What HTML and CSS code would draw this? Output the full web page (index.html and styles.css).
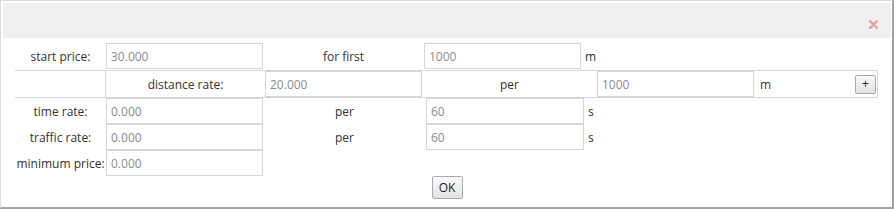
FILE: index.html
```
<!DOCTYPE html>
<html lang="en">
<head>
    <meta charset="UTF-8">
    <title>Tariff</title>
    <link rel="stylesheet" href="styles.css">
</head>
<body>
    <div class="dialog">
        <div class="dialog-header">
            <span class="close" title="close">
                <svg width="9" height="9" viewBox="0 0 9 9">
                    <path d="M1 1 L8 8 M8 1 L1 8" stroke="#e8a39b" stroke-width="2.4" stroke-linecap="square"/>
                </svg>
            </span>
        </div>

        <div class="dialog-body">
            <div class="row row-first">
                <label class="cell-label">start price:</label>
                <input type="text" value="30.000">
                <span class="cell-mid">for first</span>
                <input type="text" value="1000">
                <span class="unit">m</span>
            </div>

            <div class="row row-nested">
                <span class="cell-empty"></span>
                <span class="cell-boxed">distance rate:</span>
                <input type="text" value="20.000">
                <span class="cell-per">per</span>
                <input type="text" value="1000">
                <span class="unit unit-wide">m</span>
                <button class="btn btn-add">+</button>
            </div>

            <div class="row">
                <label class="cell-label">time rate:</label>
                <input type="text" value="0.000">
                <span class="cell-mid cell-mid-wide">per</span>
                <input type="text" class="input-wide" value="60">
                <span class="unit">s</span>
            </div>

            <div class="row">
                <label class="cell-label">traffic rate:</label>
                <input type="text" value="0.000">
                <span class="cell-mid cell-mid-wide">per</span>
                <input type="text" class="input-wide" value="60">
                <span class="unit">s</span>
            </div>

            <div class="row">
                <label class="cell-label">minimum price:</label>
                <input type="text" value="0.000">
            </div>

            <div class="actions">
                <button class="btn btn-ok">OK</button>
            </div>
        </div>
    </div>
</body>
</html>
```

FILE: styles.css
```
body {
    margin: 0;
    font-family: "Open Sans", sans-serif;
    font-size: 12px;
    color: #333;
}
.dialog {
    box-sizing: border-box;
    width: 894px;
    height: 209px;
    border-left: 1px solid #dcdcdc;
    border-top: 1px solid #dcdcdc;
    border-right: 2px solid #a3a3a3;
    border-bottom: 2px solid #a3a3a3;
    padding: 2px 1px 0 2px;
    background: white;
}
.dialog-header {
    height: 35px;
    background: #f0f0f0;
    display: flex;
    align-items: center;
    justify-content: flex-end;
    padding-right: 13px;
}
.close {
    display: flex;
    margin-top: 7px;
}
.dialog-body {
    padding: 4px 0 0 12px;
}
.row {
    display: flex;
    align-items: center;
    height: 26px;
}
.row-first {
    height: 28px;
}
.cell-label {
    width: 91px;
    text-align: center;
    white-space: nowrap;
}
input {
    box-sizing: border-box;
    width: 157px;
    height: 26px;
    border: 1px solid #d6d6d6;
    padding: 0 4px;
    margin: 0;
    font-family: "Open Sans", sans-serif;
    font-size: 12px;
    color: #8c8c8c;
    outline: none;
}
.input-wide {
    width: 158px;
}
.cell-mid {
    width: 161px;
    text-align: center;
}
.cell-mid-wide {
    width: 163px;
}
.unit {
    padding-left: 4px;
}
.row-nested {
    box-sizing: border-box;
    width: 863px;
    height: 28px;
    border-top: 1px solid #d6d6d6;
    border-bottom: 1px solid #d6d6d6;
    border-right: 1px solid #d6d6d6;
    align-items: stretch;
}
.row-nested .cell-empty {
    width: 90px;
}
.cell-boxed {
    box-sizing: border-box;
    width: 160px;
    border-left: 1px solid #d6d6d6;
    display: flex;
    align-items: center;
    justify-content: center;
}
.cell-per {
    width: 175px;
    display: flex;
    align-items: center;
    justify-content: center;
}
.unit-wide {
    display: flex;
    align-items: center;
    padding-left: 6px;
}
.btn {
    font-family: "Open Sans", sans-serif;
    font-size: 12px;
    color: #222;
    border: 1px solid #a9a9a9;
    border-radius: 2px;
    background: linear-gradient(#fafafa, #e2e2e2);
    padding: 0;
    cursor: pointer;
}
.btn-add {
    width: 21px;
    height: 19px;
    margin: auto 1px auto auto;
    line-height: 16px;
}
.actions {
    display: flex;
    justify-content: center;
    padding-right: 12px;
}
.btn-ok {
    width: 31px;
    height: 23px;
}
```
